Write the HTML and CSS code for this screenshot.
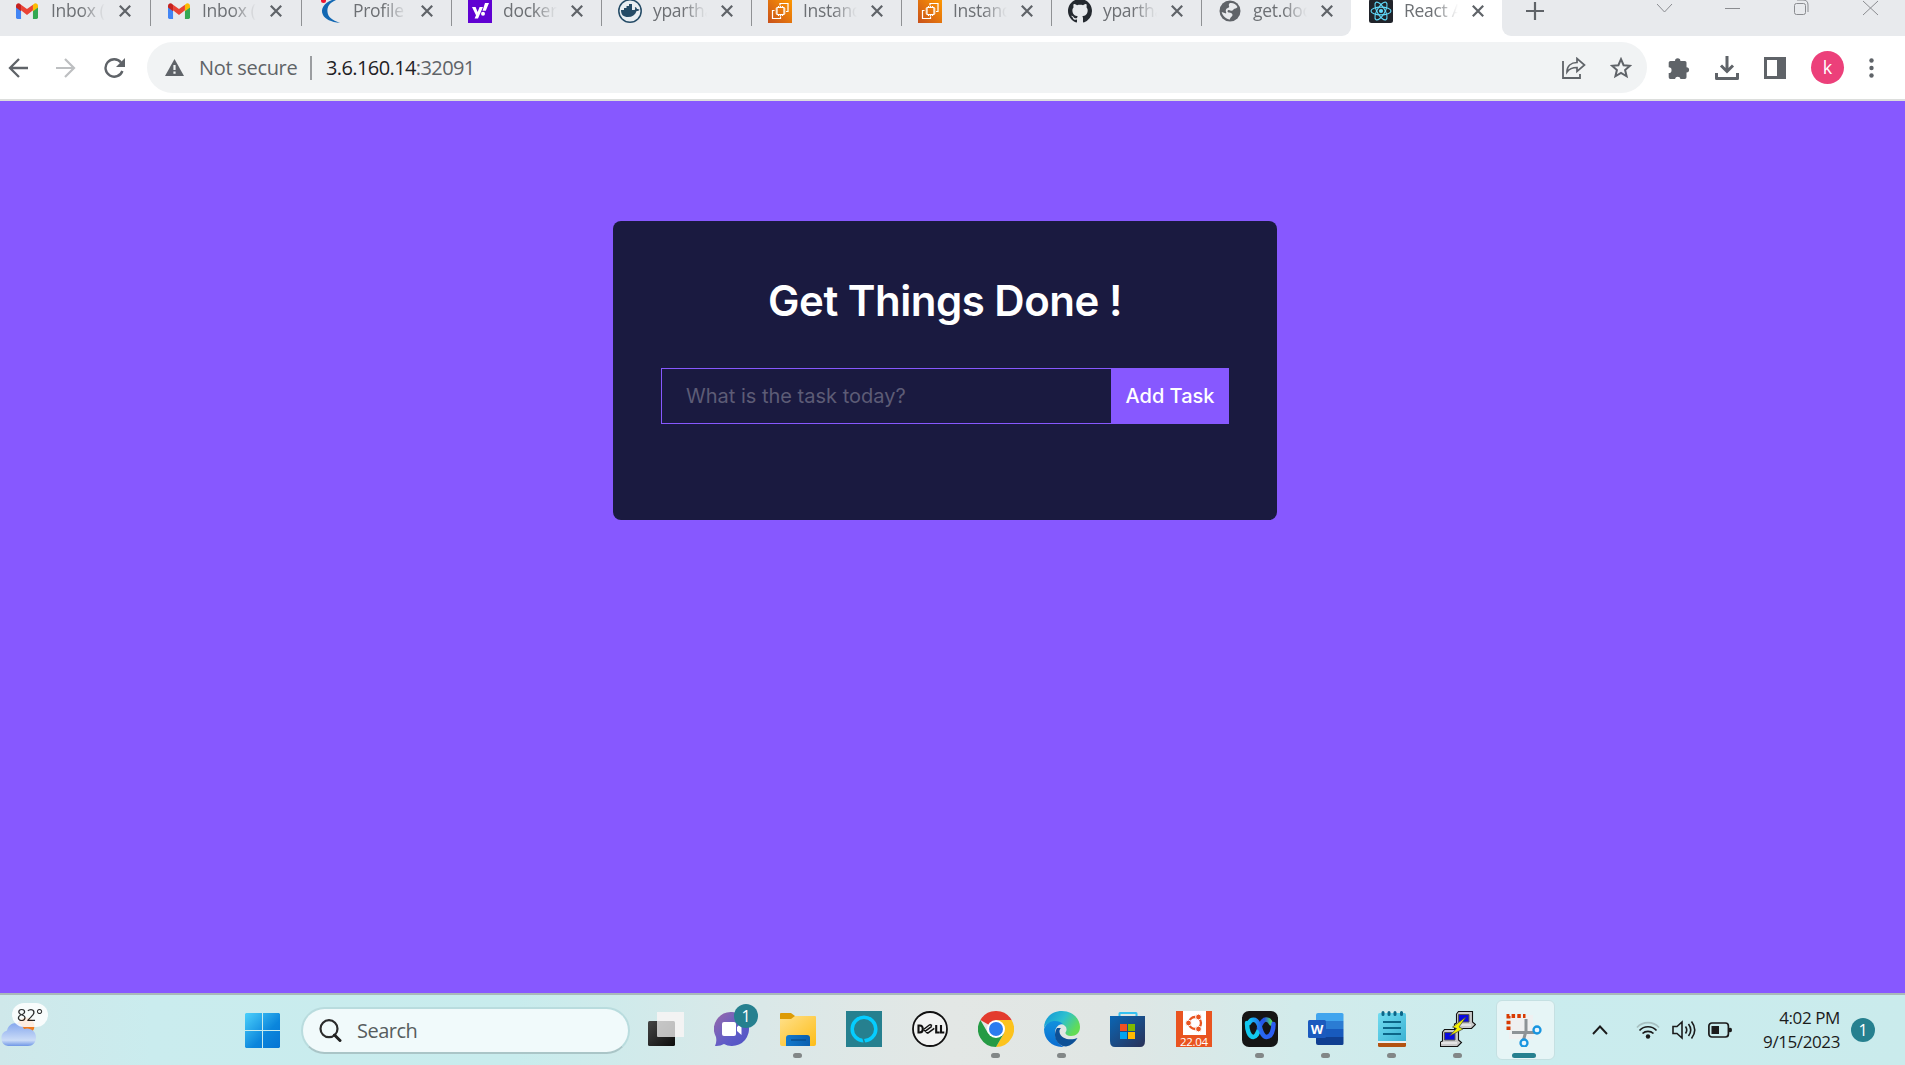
FILE: index.html
```html
<!DOCTYPE html>
<html lang="en">
<head>
<meta charset="utf-8">
<title>React App</title>
<link rel="stylesheet" href="styles.css">
</head>
<body>
<svg class="defs" width="0" height="0" aria-hidden="true">
  <defs>
    <linearGradient id="aws" x1="0" y1="1" x2="1" y2="0"><stop offset="0" stop-color="#c8511b"/><stop offset="1" stop-color="#ff9900"/></linearGradient>
    <linearGradient id="win" x1="0" y1="0" x2="1" y2="1"><stop offset="0" stop-color="#4cd0fb"/><stop offset=".6" stop-color="#0b86dc"/><stop offset="1" stop-color="#0474d3"/></linearGradient>
    <linearGradient id="cloud" x1="0" y1="0" x2="0" y2="1"><stop offset="0" stop-color="#86a8ee"/><stop offset=".75" stop-color="#cbdcf7"/><stop offset="1" stop-color="#6f97e6"/></linearGradient>
    <linearGradient id="dark" x1="0" y1="0" x2="1" y2="1"><stop offset="0" stop-color="#454545"/><stop offset="1" stop-color="#0c0c0c"/></linearGradient>
    <linearGradient id="teams" x1="0" y1="0" x2="1" y2="1"><stop offset="0" stop-color="#9a6aa8"/><stop offset=".6" stop-color="#5f5cc8"/><stop offset="1" stop-color="#4f52c4"/></linearGradient>
    <linearGradient id="folder" x1="0" y1="0" x2="1" y2="1"><stop offset="0" stop-color="#ffe08a"/><stop offset="1" stop-color="#fdbd18"/></linearGradient>
    <linearGradient id="tray" x1="0" y1="0" x2="1" y2="0"><stop offset="0" stop-color="#1279cd"/><stop offset="1" stop-color="#0b5fae"/></linearGradient>
    <linearGradient id="edgeTop" x1="0" y1="0" x2="1" y2=".5"><stop offset="0" stop-color="#1193d8"/><stop offset=".55" stop-color="#2dc0cf"/><stop offset="1" stop-color="#62dc55"/></linearGradient>
    <linearGradient id="edgeLeft" x1="0" y1="0" x2="0" y2="1"><stop offset="0" stop-color="#1291dd"/><stop offset="1" stop-color="#0a6cd0"/></linearGradient>
    <linearGradient id="store" x1="0" y1="0" x2="1" y2="1"><stop offset="0" stop-color="#0a66b5"/><stop offset="1" stop-color="#2a3157"/></linearGradient>
    <linearGradient id="webex" x1="0" y1="0" x2="1" y2="0"><stop offset="0" stop-color="#13c9f5"/><stop offset=".5" stop-color="#2868f0"/><stop offset="1" stop-color="#2b5cf2"/></linearGradient>
    <linearGradient id="webexR" x1="0" y1="0" x2="1" y2="0"><stop offset="0" stop-color="#2457e8"/><stop offset=".45" stop-color="#2457e8"/><stop offset="1" stop-color="#4ed66b"/></linearGradient>
    <linearGradient id="note" x1="0" y1="0" x2="1" y2="1"><stop offset="0" stop-color="#72dcf1"/><stop offset="1" stop-color="#3bb2d3"/></linearGradient>
  </defs>
  <symbol id="gmail" viewBox="0 0 24 18">
    <path fill="#4285f4" d="M1.6 17.5H5.5V8L0 4v11.900Q0 17.500 1.600 17.500z"/>
    <path fill="#34a853" d="M18.500 17.500h3.900Q24 17.500 24 15.900V4l-5.500 4z"/>
    <path fill="#ea4335" d="M5.500 8V1.800L12 6.600l6.500-4.800V8L12 13z"/>
    <path fill="#c5221f" d="M0 3v2l5.500 4V1.800L4.600 1C2.800-.4 0 .8 0 3z"/>
    <path fill="#fbbc04" d="M18.500 1.800V9L24 5V3c0-2.200-2.800-3.400-4.600-2z"/>
  </symbol>
  <symbol id="close" viewBox="0 0 12 12"><path d="M.8.8l10.400 10.400M11.200.8L.8 11.200" fill="none" stroke="#5f6368" stroke-width="2.200"/></symbol>
  <symbol id="ec2" viewBox="0 0 24 24">
    <path fill="url(#aws)" d="M0 0h24v24H0z"/>
    <path fill="none" stroke="#fff" stroke-width="1.200" d="M9 8.500h7v7H9zM10.500 8.500V7m2 1.500V7m2 1.500V7M10.500 17v-1.500m2 1.500v-1.500m2 1.500v-1.500M9 10H7.500M9 12H7.500M9 14H7.500M17.500 10H16m1.500 2H16m1.500 2H16M12 6.500V4.500h8v8h-2M6.500 11.500h-2v8h8v-2"/>
  </symbol>
  <symbol id="atom" viewBox="0 0 24 24">
    <rect width="24" height="24" rx="2.500" fill="#20232a"/>
    <g fill="none" stroke="#61dafb" stroke-width="1.100"><ellipse cx="12" cy="12" rx="10" ry="3.900"/><ellipse cx="12" cy="12" rx="10" ry="3.900" transform="rotate(60 12 12)"/><ellipse cx="12" cy="12" rx="10" ry="3.900" transform="rotate(120 12 12)"/></g>
    <circle cx="12" cy="12" r="2.100" fill="#61dafb"/>
  </symbol>
</svg>

<header class="tabs">
  <div class="tab"><svg class="fav" viewBox="0 0 24 24"><use href="#gmail" x="0" y="4" width="22" height="16.500"/></svg><span class="name">Inbox (</span><svg class="x"><use href="#close"/></svg></div>
  <div class="tab"><svg class="fav" viewBox="0 0 24 24"><use href="#gmail" x="1" y="4" width="22" height="16.500"/></svg><span class="name">Inbox (4</span><svg class="x"><use href="#close"/></svg></div>
  <div class="tab"><svg class="fav" viewBox="0 0 24 24"><path fill="#1268b3" d="M14 1C6 4 2 10 5 16c2 4 8 7 17 8-8-3-12-6-12.500-11C9 8 11 4 18 1z"/><circle cx="5.500" cy="1.500" r="2.500" fill="#f0142f"/></svg><span class="name">Profile</span><svg class="x"><use href="#close"/></svg></div>
  <div class="tab"><svg class="fav" viewBox="0 0 24 24"><path fill="#6001d2" d="M0 0h24v24H0z"/><path fill="#fff" d="M4 8h3.600l2 5 2-5H15L10 19.500H6.600L8 16.300zM17 4h4l-3.200 7.800h-3.300z"/><circle cx="15" cy="14.800" r="2" fill="#fff"/></svg><span class="name">docker</span><svg class="x"><use href="#close"/></svg></div>
  <div class="tab"><svg class="fav" viewBox="0 0 24 24"><circle cx="12" cy="12" r="11.200" fill="#e8eef2" stroke="#244b66" stroke-width="1.500"/><path fill="#244b66" d="M3 11h3V9h2.500V7H11V5h3v6h2.500c.7 0 .9-1.600.3-2.500 1-.5 1.800.3 2.200 1.500 1 0 2 .2 2.500.7-.7 1-1.700 1.300-2.900 1.300-1.500 4-4.300 6-8.600 6-4.500 0-7-2-7-7z"/></svg><span class="name">ypartha</span><svg class="x"><use href="#close"/></svg></div>
  <div class="tab"><svg class="fav"><use href="#ec2"/></svg><span class="name">Instance</span><svg class="x"><use href="#close"/></svg></div>
  <div class="tab"><svg class="fav"><use href="#ec2"/></svg><span class="name">Instance</span><svg class="x"><use href="#close"/></svg></div>
  <div class="tab"><svg class="fav" viewBox="0 0 16 16"><path fill="#24292f" d="M8 0C3.580 0 0 3.580 0 8c0 3.540 2.290 6.530 5.470 7.590.4.070.55-.17.55-.38 0-.19-.01-.82-.01-1.490-2.010.37-2.530-.49-2.690-.94-.09-.23-.48-.94-.82-1.130-.28-.15-.68-.52-.01-.53.63-.01 1.080.58 1.230.82.72 1.210 1.870.87 2.330.66.070-.52.28-.87.51-1.070-1.780-.2-3.640-.89-3.640-3.950 0-.87.31-1.590.82-2.150-.08-.2-.36-1.020.08-2.120 0 0 .67-.21 2.200.82.64-.18 1.320-.27 2-.27s1.360.09 2 .27c1.530-1.040 2.200-.82 2.200-.82.44 1.100.16 1.920.08 2.120.51.56.82 1.270.82 2.150 0 3.070-1.870 3.750-3.650 3.950.29.25.54.73.54 1.480 0 1.070-.01 1.930-.01 2.200 0 .21.15.46.55.38A8.010 8.010 0 0 0 16 8c0-4.420-3.580-8-8-8z"/></svg><span class="name">ypartha</span><svg class="x"><use href="#close"/></svg></div>
  <div class="tab plain"><svg class="fav" viewBox="0 0 24 24"><circle cx="12" cy="12" r="10.500" fill="#5f6368"/><path fill="#e8eaed" d="M12 4c3-.5 6 1 7.500 4-1 2-3 1-4 2.500S13 12 11 11c-2 0-2 2.500 0 2.500 2 .2 3.500.8 3.500 2.500S12 18 12 20.500C8 20 4.500 17 3.700 13L8 14.500c1-1-1-2 0-4S12 9 11 7c-.5-1.500 0-2.500 1-3z"/></svg><span class="name">get.doc</span><svg class="x"><use href="#close"/></svg></div>
  <div class="tab active"><svg class="fav"><use href="#atom"/></svg><span class="name">React A</span><svg class="x"><use href="#close"/></svg></div>
  <div class="strip-end">
    <svg width="18" height="18" viewBox="0 0 18 18"><path d="M9 0v18M0 9h18" stroke="#5f6368" stroke-width="2.200"/></svg>
    <svg class="caption" width="221" height="16" viewBox="0 0 221 16"><path d="M0 4l7.500 8L15 4M68 8.500h15M206 1l15 14M221 1l-15 14M140 0h6q5 0 5 5v7" fill="none" stroke="#8a8c90" stroke-width="1"/><rect x="137.500" y="3.500" width="11" height="11" rx="2" fill="none" stroke="#8a8c90"/></svg>
  </div>
</header>

<nav class="toolbar">
  <div class="history">
    <svg width="20" height="20" viewBox="0 0 20 20"><path d="M20 10H2M11 1L2 10l9 9" fill="none" stroke="#5f6368" stroke-width="2.300"/></svg>
    <svg width="20" height="20" viewBox="0 0 20 20"><path d="M0 10h18M9 1l9 9-9 9" fill="none" stroke="#bdbfc1" stroke-width="2.200"/></svg>
    <svg width="21" height="20" viewBox="0 0 21 20"><path d="M18.400 13A8.700 8.700 0 1 1 17 4.500" fill="none" stroke="#5f6368" stroke-width="2.400"/><path d="M21 0v9h-9z" fill="#5f6368"/></svg>
  </div>
  <div class="omnibox">
    <svg width="19" height="17" viewBox="0 0 19 17"><path d="M9.500 0L19 17H0z" fill="#5f6368"/><path d="M8.400 6h2.200v5H8.400zM8.400 12.500h2.200v2.200H8.400z" fill="#f1f3f4"/></svg>
    <span class="secure">Not secure</span><i class="bar"></i><span class="url">3.6.160.14<em>:32091</em></span>
    <svg class="share" width="24" height="22" viewBox="0 0 24 22"><path d="M1 4v17h17v-4" fill="none" stroke="#5f6368" stroke-width="1.800"/><path d="M5 15c0-6 4-9.500 10-9.500V1.500L22.500 8 15 14.500v-4c-4.500 0-7.500 1-10 4.500z" fill="none" stroke="#5f6368" stroke-width="1.700"/></svg>
    <svg width="22" height="22" viewBox="0 0 22 22"><path d="M11 2.200l2.600 6 6.300.6-4.800 4.200 1.500 6.300L11 16l-5.600 3.300L6.900 13 2.100 8.800l6.300-.6z" fill="none" stroke="#5f6368" stroke-width="2"/></svg>
  </div>
  <div class="actions">
    <svg width="22" height="22" viewBox="0 0 22 22"><path fill="#5f6368" d="M2.500 4H7a2.700 2.700 0 0 1 5.400 0h4.500q1.600 0 1.600 1.600v4.600a2.500 2.500 0 0 1 0 5.200v4.900q0 1.700-1.700 1.700h-4.300a2.800 2.800 0 0 0-5.500 0H2.200Q.7 22 .7 20.300V16a2.800 2.800 0 0 0 0-5.700V5.600Q.7 4 2.500 4z"/></svg>
    <svg width="24" height="24" viewBox="0 0 24 24"><path fill="none" stroke="#5f6368" stroke-width="3" d="M12 0v15M6 9.500l6 6 6-6"/><path fill="none" stroke="#5f6368" stroke-width="3" stroke-linejoin="round" d="M1.500 17v5.500h21V17"/></svg>
    <svg width="22" height="22" viewBox="0 0 22 22"><path fill="#5f6368" fill-rule="evenodd" d="M0 0h22v22H0zM3 3v16h10V3z"/></svg>
    <span class="avatar">k</span>
    <svg width="5" height="20" viewBox="0 0 5 20"><g fill="#5f6368"><circle cx="2.500" cy="2.500" r="2.200"/><circle cx="2.500" cy="10" r="2.200"/><circle cx="2.500" cy="17.500" r="2.200"/></g></svg>
  </div>
</nav>

<main class="page">
  <section class="card">
    <h1>Get Things Done !</h1>
    <form class="form"><input type="text" placeholder="What is the task today?"><button type="button">Add Task</button></form>
  </section>
</main>

<footer class="taskbar">
  <div class="weather">
    <svg width="37" height="30" viewBox="0 0 37 30"><circle cx="26" cy="9" r="8.500" fill="#ef7a1c"/><path fill="url(#cloud)" d="M8 29a8 8 0 0 1-1-15.500C9 5 20 3 24 12c6-2 12 2 12 8.500 0 5-3.500 8.500-8 8.500z"/></svg>
    <span class="temp">82°</span>
  </div>
  <svg class="start" width="35" height="35" viewBox="0 0 35 35"><path fill="url(#win)" d="M1 0h16v17H0V1zM18 0h16l1 1v16H18zM0 18h17v17H1l-1-1zM18 18h17v16l-1 1H18z"/></svg>
  <div class="search"><svg width="23" height="23" viewBox="0 0 23 23"><circle cx="10" cy="9.700" r="8.500" fill="none" stroke="#2b2b2b" stroke-width="2.200"/><path d="M15.500 16l5.500 5.500" stroke="#222" stroke-width="3" stroke-linecap="round"/></svg><span>Search</span></div>
  <div class="apps">
    <div class="app"><svg viewBox="0 0 36 36"><rect y="10" width="27" height="25" rx="1.500" fill="url(#dark)"/><rect x="9" y="1" width="27" height="25" rx="1" fill="#f5f5f5" fill-opacity=".75"/><path fill="#f3f3f3" d="M9 1h27v25h-9V10H9z"/></svg></div>
    <div class="app"><svg viewBox="0 0 36 36"><path fill="url(#teams)" d="M18 1a17 17 0 1 1-8 32q-4 2.500-9 2 2-4 1-9A17 17 0 0 1 18 1z"/><rect x="8" y="11" width="14" height="14" rx="2" fill="#fff"/><path fill="#fff" d="M23 16l4.500-4v12L23 20z"/></svg><b class="badge">1</b></div>
    <div class="app run"><svg viewBox="0 0 36 36"><path fill="#dd9b06" d="M0 3q0-1 1-1h10l4 3v5H0z"/><path fill="url(#folder)" d="M0 8h11l4-3h20q1 0 1 1v27q0 2-2 2H2q-2 0-2-2z"/><path fill="url(#tray)" d="M6 35v-8q0-3 3-3h18q3 0 3 3v8z"/><path stroke="#084f91" stroke-width="1.500" d="M11 29h15"/></svg></div>
    <div class="app"><svg viewBox="0 0 36 36"><path fill="#26808f" d="M0 0h36v36H0z"/><circle cx="18" cy="18" r="11.800" fill="none" stroke="#05cdff" stroke-width="3.500"/><path stroke="#26808f" stroke-width="1.500" d="M17 27l1.500 5"/></svg></div>
    <div class="app"><svg viewBox="0 0 36 36"><circle cx="18" cy="18" r="17" fill="#f1f3f2" stroke="#111" stroke-width="1.800"/><path fill="none" stroke="#111" stroke-width="2.100" d="M6.500 14.500v7h1.300q3 0 3-3.500t-3-3.500zM24.200 14v7.500h3.500M29 14v7.500h3.300"/><path fill="none" stroke="#111" stroke-width="1.500" d="M11.500 18.500l6.500-5M13 20.300l6.800-5M15.500 22.300l6.800-5M18 13.500l2 1.200M11.500 18.500l4 3.800"/></svg></div>
    <div class="app run"><svg viewBox="0 0 36 36"><path fill="#e33b2e" d="M18 18L2.410 9A18 18 0 0 1 33.590 9z"/><path fill="#e33b2e" d="M18 9h15.600l-4 5H18z"/><path fill="#fcc31e" d="M18 9h15.590A18 18 0 0 1 18 36l7.800-13.500z"/><path fill="#259b45" d="M2.410 9A18 18 0 0 0 18 36l7.800-13.500L18 25l-7.800-2.500z"/><circle cx="18" cy="18" r="9" fill="#fff"/><circle cx="18" cy="18" r="7" fill="#2b7cf0"/></svg></div>
    <div class="app run"><svg viewBox="0 0 36 36"><path fill="url(#edgeTop)" d="M0 17C0 7 8 0 18 0c11 0 18 8 18 16 0 6-4 9-9 9-4 0-6-2-5.500-3.500C24 18 22 14 17 13 10 10 3 11 0 17z"/><path fill="url(#edgeLeft)" d="M0 18C3 9 14 8 19 13c-5 0-8 4-8 9 0 7 4 12 9 13.800C9 37 0 29 0 18z"/><path fill="#0d5096" d="M13 17c-5 8 0 18 9 18.500 5-1 9-4 11.500-8.500-7 3-17 1-18-6-.2-2 .5-3 1.500-4z"/></svg></div>
    <div class="app"><svg viewBox="0 0 36 36"><path fill="none" stroke="#35c1f1" stroke-width="2" d="M9.500 7V2.500q0-.5.5-.5h16q.5 0 .5.500V7"/><path fill="url(#store)" d="M0 5h35v25q0 6-5 6H5q-5 0-5-6z"/><path fill="#f25022" d="M10 13h7v7h-7z"/><path fill="#7fba00" d="M18 13h7v7h-7z"/><path fill="#00a4ef" d="M10 21h7v7h-7z"/><path fill="#ffb900" d="M18 21h7v7h-7z"/></svg></div>
    <div class="app"><svg viewBox="0 0 36 36"><path fill="#e95420" d="M0 0h36v36H0z"/><path fill="#fff" d="M7 0h23v24H7z"/><circle cx="19" cy="12" r="6" fill="none" stroke="#e95420" stroke-width="2.300"/><g fill="#e95420" stroke="#fff"><circle cx="12.500" cy="12" r="2.900"/><circle cx="22.500" cy="6" r="2.900"/><circle cx="22.500" cy="18" r="2.900"/></g><text x="4" y="35" textLength="28" fill="#fff" font-size="11.500" font-family="Open Sans, sans-serif">22.04</text></svg></div>
    <div class="app run"><svg viewBox="0 0 36 36"><rect width="36" height="36" rx="7" fill="#151515"/><g fill="none" stroke-width="4.500" stroke-linecap="round"><path stroke="#12c9ef" d="M5 12c0 7 2 14 6.500 14 3 0 4.500-5 6.500-9.500"/><path stroke="url(#webexR)" d="M17 17c2-5 4-8.500 7-8.500 3 0 4 1.500 5 4"/><path stroke="url(#webex)" d="M7 12c2-4 7-5 9.500 1C19 19 20 26 24.500 26c5 0 7-7 7-13"/></g></svg></div>
    <div class="app run"><svg viewBox="0 0 36 36"><path fill="#41a5ee" d="M10 2h24q1.500 0 1.500 1.500V10H8V4q0-2 2-2z"/><path fill="#2b7cd3" d="M8 10h27.500v8H8z"/><path fill="#185abd" d="M8 18h27.500v8H8z"/><path fill="#103f91" d="M8 26h27.500v6.500q0 1.500-1.500 1.500H10q-2 0-2-2z"/><rect y="9" width="18" height="18" rx="1.500" fill="#1b5abe"/><text x="9" y="23" text-anchor="middle" fill="#fff" font-size="13" font-weight="700" font-family="Open Sans, sans-serif">W</text></svg></div>
    <div class="app run"><svg viewBox="0 0 36 36"><path fill="#b35312" d="M4 30h28v4.500q0 1.500-1.500 1.500h-25Q4 36 4 34.500z"/><path fill="#e9eef0" d="M4 28h28v4H4z"/><path fill="url(#note)" d="M5.500 2h25Q32 2 32 3.500V30H4V3.500Q4 2 5.500 2z"/><path stroke="#0c6587" stroke-width="1.800" d="M9 11h18M9 17h18M9 23h18"/><path stroke="#0c6587" stroke-width="3" stroke-linecap="round" d="M9 1.500v2M15 1.500v2M21 1.500v2M27.500 1.500v2"/></svg></div>
    <div class="app run"><svg viewBox="0 0 36 36"><g id="pc"><path fill="#c9c9c9" stroke="#111" stroke-width="1.100" d="M16.500 3l2-2.500h14V11l3 2.500-4 4H14.500v-4.500l2-1z"/><path fill="#0a0ae0" stroke="#555" d="M18.500 3.500H29v7.500H18.500z"/><path stroke="#fff" d="M15 14h16"/></g><use href="#pc" x="-14" y="18"/><path fill="#f4f000" stroke="#444" stroke-width=".7" d="M26 6L12.500 16l4 1.500L9.500 25 23 18l-4-2z"/></svg></div>
    <div class="app run current"><svg viewBox="0 0 36 36"><path fill="#f2eef0" d="M3 4h24v24H3z" opacity=".7"/><path fill="none" stroke="#d83b01" stroke-width="4" stroke-dasharray="3.500 2.200" d="M2.500 19V5h17"/><path fill="none" stroke="#8d9296" stroke-width="3" d="M20 8v12l-2.500 9M6 21.500h24"/><circle cx="31" cy="19" r="3.500" fill="#eaf6fd" stroke="#1895e0" stroke-width="2.300"/><circle cx="18" cy="32" r="3.500" fill="#eaf6fd" stroke="#1895e0" stroke-width="2.300"/></svg></div>
  </div>
  <div class="systray">
    <svg width="16" height="10" viewBox="0 0 16 10"><path d="M1 9l7-7.500L15 9" fill="none" stroke="#1b1b1b" stroke-width="1.900"/></svg>
    <svg class="wifi" width="24" height="18" viewBox="0 0 24 18"><g fill="none" stroke="#1b1b1b" stroke-width="1.700"><path stroke="#a8c0c1" d="M1 6.500a15 15 0 0 1 22 0"/><path d="M3.500 9.500a11.500 11.500 0 0 1 17 0M6.500 12.500a8 8 0 0 1 11 0"/></g><circle cx="12" cy="15.500" r="2.200" fill="#1b1b1b"/></svg>
    <svg width="24" height="20" viewBox="0 0 24 20"><g fill="none" stroke="#1b1b1b" stroke-width="1.600"><path d="M1 6.500h4l5-4.500v16l-5-4.500H1zM13.500 6.500q2.500 3.500 0 7M16.500 4q4.500 6 0 12M19.500 1.500q6.500 8.500 0 17"/></g></svg>
    <svg width="24" height="16" viewBox="0 0 24 16"><rect x=".9" y="1" width="19.500" height="14" rx="3" fill="none" stroke="#1b1b1b" stroke-width="1.700"/><path fill="#1b1b1b" d="M3.500 4h7.500v8H3.500zM21 6q3-1 3 2t-3 2z"/></svg>
    <div class="clock"><span class="time">4:02 PM</span><span class="date">9/15/2023</span></div>
    <b class="count">1</b>
  </div>
</footer>
</body>
</html>
```
FILE: styles.css
```css
* { box-sizing: border-box; }
html, body { margin: 0; height: 1065px; overflow: hidden; }
body { display: flex; flex-direction: column; font-family: "Open Sans", "Noto Sans", sans-serif; }
svg { display: block; flex: none; }
.defs { position: absolute; }

/* Tab strip */
.tabs { display: flex; height: 36px; padding-left: 1px; background: #fff; overflow: hidden; }
.tab { display: flex; align-items: flex-start; flex: none; width: 150px; padding-left: 16px; background: linear-gradient(#8f9194, #8f9194) right top / 1.500px 26px no-repeat #e8eaed; color: #6d7074; }
.tab:first-child, .tab:nth-child(2) { width: 151px; }
.tab:first-child { margin-left: -1px; }
.tab:nth-child(2) { width: 151px; }
.tab.plain { background: #e8eaed; border-bottom-right-radius: 9px; width: 149px; }
.tab.active { background: #fff; width: 151px; padding-left: 18px; }
.fav { width: 24px; height: 24px; margin-top: -1px; }
.name { flex: none; width: 54px; margin-left: 11px; overflow: hidden; white-space: nowrap; font-size: 17.500px; line-height: 24px; margin-top: -2px; letter-spacing: -.3px; -webkit-mask-image: linear-gradient(90deg, #000 55%, transparent); mask-image: linear-gradient(90deg, #000 55%, transparent); }
.x { width: 12px; height: 12px; margin: 5px 0 0 14px; }
.strip-end { flex: 1; display: flex; padding: 2px 27px 0 24px; background: #e8eaed; border-bottom-left-radius: 9px; }
.caption { margin: -2px 0 0 auto; }

/* Toolbar */
.toolbar { display: flex; align-items: center; height: 65px; padding-right: 31px; background: #fff; border-bottom: 2px solid #dcdedc; }
.history { display: flex; align-items: center; gap: 28px; width: 147px; padding-left: 8px; }
.omnibox { display: flex; align-items: center; flex: none; width: 1500px; height: 51px; padding: 0 15px 0 18px; border-radius: 26px; background: #f1f3f4; font-size: 20px; color: #606367; }
.secure { margin-left: 15px; width: 100px; white-space: nowrap; letter-spacing: -.3px; }
.bar { width: 2px; height: 24px; margin: 0 14px 0 11px; background: #9b9da0; }
.url { color: #1f2124; letter-spacing: -.6px; }
.url em { font-style: normal; color: #606367; }
.share { margin: 0 24px 0 auto; }
.actions { display: flex; align-items: center; justify-content: space-between; width: 206px; margin-left: auto; }
.avatar { width: 33px; height: 33px; border-radius: 50%; background: #ec407a; color: #fff; font-size: 18px; line-height: 33px; text-align: center; }

/* Page */
.page { flex: 1; padding-top: 120px; background: #8758ff; }
.card { width: 664px; height: 299px; margin-left: 613px; padding: 48px; border-radius: 8px; background: #1a1a40; color: #fff; font-family: Inter, sans-serif; }
.card h1 { margin: 0 0 35px; font-size: 42px; font-weight: 600; line-height: 64px; text-align: center; letter-spacing: -.5px; white-space: nowrap; }
.form { display: flex; height: 56px; }
.form input { width: 450px; padding: 0 24px; border: 1px solid #8758ff; border-right: 0; background: none; color: #fff; font: 20px Inter, sans-serif; outline: 0; }
.form input::placeholder { color: #5d5c76; opacity: 1; }
.form button { flex: 1; padding: 0; border: 0; background: #8758ff; color: #fff; font: 500 20px Inter, sans-serif; white-space: nowrap; }

/* Taskbar */
.taskbar { display: flex; align-items: center; height: 72px; border-top: 2px solid #a9b9b9; background: linear-gradient(90deg, #cfe8ea, #caecee 8%, #c8eced 27%, #dae8e8 40%, #e3e7e5 50%, #e0e6e4 58%, #d2ebeb 68%, #caecee 80%, #caebec); }
.weather { position: relative; flex: none; width: 245px; height: 70px; padding-top: 22px; }
.temp { position: absolute; left: 12px; top: 8px; width: 36px; height: 24px; border-radius: 12px; background: #fffe; opacity: .92; color: #1b1b1b; font-size: 16.500px; line-height: 24px; text-align: center; }
.start { margin-right: 21px; }
.search { display: flex; align-items: center; flex: none; width: 329px; height: 47px; padding-left: 16px; border: 2px solid #b9dcde; border-bottom-color: #aac5c7; border-radius: 24px; background: #f1fafb; color: #575d5e; font-size: 20px; margin-right: 3px; }
.search span { margin-left: 15px; letter-spacing: -.5px; }
.apps { display: flex; }
.app { position: relative; display: grid; place-items: center; width: 66px; height: 70px; }
.app > svg { width: 36px; height: 36px; margin-bottom: 2px; }
.app.run::after { content: ""; position: absolute; bottom: 7px; left: 28px; width: 9px; height: 5px; border-radius: 3px; background: #828787; }
.app.current { background: linear-gradient(#e6f5f6, #e6f5f6) center 6px / 56px 56px no-repeat; }
.app.current::before { content: ""; position: absolute; left: 5px; top: 5px; width: 57px; height: 58px; border: 1px solid #c5e0e2; border-radius: 6px; background: #e6f5f6; z-index: -1; }
.app.current { background: none; z-index: 0; }
.app.current::after { left: 21px; width: 24px; background: #26808f; }
.badge, .count { width: 24px; height: 24px; border-radius: 50%; background: #26808f; color: #fff; font-size: 16px; font-weight: 400; line-height: 24px; text-align: center; }
.badge { position: absolute; left: 35px; top: 9px; }
.systray { display: flex; align-items: center; flex: 1; padding-left: 35px; }
.systray svg { margin-right: 12px; }
.systray > svg:first-child { margin-right: 28px; }
.clock { display: flex; flex-direction: column; align-items: flex-end; width: 96px; font-size: 17px; line-height: 24px; color: #1b1b1b; white-space: nowrap; }
.time, .date { letter-spacing: -.4px; }
.count { margin-left: 11px; }
```
